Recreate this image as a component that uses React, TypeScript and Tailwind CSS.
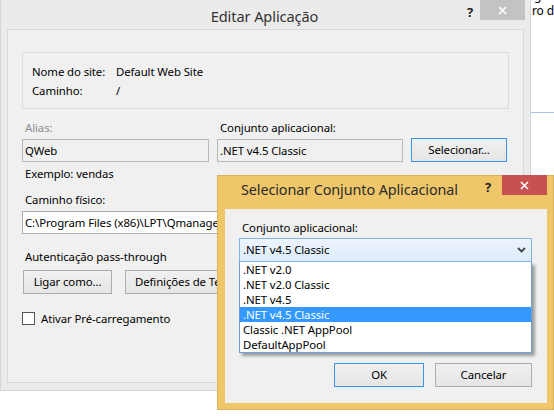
import React from 'react';

const WinButton: React.FC<{ label: string; w: string; focused?: boolean }> = ({ label, w, focused }) => (
  <div
    className={`${w} h-[24px] flex items-center justify-center border bg-gradient-to-b from-[#f0f0f0] to-[#e5e5e5] ${
      focused ? 'border-[#3c94e8]' : 'border-[#adadad]'
    }`}
  >
    {label}
  </div>
);

const poolOptions = ['.NET v2.0', '.NET v2.0 Classic', '.NET v4.5', '.NET v4.5 Classic', 'Classic .NET AppPool', 'DefaultAppPool'];

const SelectPoolDialog: React.FC = () => (
  <div className="absolute left-[217px] top-[175px] w-[337px] h-[235px] bg-[#efc76a] border border-[#dab35a] flex flex-col pl-[7px] pr-[6px] pb-[6px]">
    {/* title bar */}
    <div className="h-[33px] flex items-start shrink-0">
      <div className="flex-1 pl-[16px] pt-[4px] text-[14.4px] tracking-[-0.1px] leading-[20px] text-[#2b2b2b]">Selecionar Conjunto Aplicacional</div>
      <div className="w-[20px] pt-[2px] text-center text-[13px] font-bold text-[#222]">?</div>
      <div className="w-[45px] h-[20px] mt-[-1px] ml-[4px] bg-[#c75050] flex items-center justify-center">
        <svg width="9" height="9" viewBox="0 0 9 9">
          <path d="M1 1L8 8M8 1L1 8" stroke="#fff" strokeWidth="1.6" />
        </svg>
      </div>
    </div>

    {/* body */}
    <div className="flex-1 bg-[#f0f0f0] flex flex-col pl-[14px] pr-[15px]">
      <div className="pt-[11px] pl-[3px] leading-[15px]">Conjunto aplicacional:</div>
      <div className="mt-[3px] h-[24px] border border-[#7eb4ea] bg-gradient-to-b from-[#ecf4fc] to-[#dcecfc] flex items-center pl-[3px] pr-[5px]">
        <span className="flex-1">.NET v4.5 Classic</span>
        <svg width="9" height="6" viewBox="0 0 9 6">
          <path d="M1 1L4.5 4.5L8 1" fill="none" stroke="#444" strokeWidth="1.8" />
        </svg>
      </div>
      <div className="border-x border-b border-[#6f9fd6] bg-white shadow-[3px_3px_3px_rgba(0,0,0,0.35)]">
        {poolOptions.map((opt) => (
          <div
            key={opt}
            className={`h-[15px] leading-[15px] pl-[3px] ${opt === '.NET v4.5 Classic' ? 'bg-[#3399ff] text-white' : ''}`}
          >
            {opt}
          </div>
        ))}
      </div>
      <div className="mt-[10px] flex justify-end gap-[11px]">
        <WinButton label="OK" w="w-[90px]" focused />
        <WinButton label="Cancelar" w="w-[97px]" />
      </div>
    </div>
  </div>
);

const EditAppDialog: React.FC = () => (
  <div className="w-[531px] h-[391px] shrink-0 bg-[#ebebeb] border-l border-r border-b border-[#d6d6d6] flex flex-col pl-[6px] pr-[6px] pb-[7px]">
    {/* title bar */}
    <div className="h-[29px] flex items-start shrink-0">
      <div className="flex-1 pl-[62px] pt-[5px] text-center text-[14.6px] leading-[22px] text-[#333]">Editar Aplicação</div>
      <div className="w-[20px] pt-[3px] text-center text-[13px] font-bold text-[#222]">?</div>
      <div className="w-[45px] h-[20px] mr-[-1px] bg-[#c3c3c3] flex items-center justify-center">
        <svg width="9" height="9" viewBox="0 0 9 9">
          <path d="M1 1L8 8M8 1L1 8" stroke="#fff" strokeWidth="1.6" />
        </svg>
      </div>
    </div>

    {/* content */}
    <div className="flex-1 bg-[#f0f0f0] border border-[#dadada] px-[14px] flex flex-col items-start">
      <div className="mt-[22px] w-[487px] h-[57px] border border-[#dcdcdc] px-[9px] pt-[9px] grid grid-cols-[84px_1fr] content-start leading-[19px]">
        <span>Nome do site:</span>
        <span>Default Web Site</span>
        <span>Caminho:</span>
        <span>/</span>
      </div>

      <div className="mt-[11px] flex items-end gap-[8px]">
        <div className="flex flex-col gap-[4px]">
          <span className="pl-[3px] leading-[15px] text-[#8d8d8d]">Alias:</span>
          <div className="w-[187px] h-[23px] border border-[#b9b9b9] bg-[#f0f0f0] pl-[2px] leading-[21px]">QWeb</div>
        </div>
        <div className="flex flex-col gap-[4px]">
          <span className="pl-[3px] leading-[15px]">Conjunto aplicacional:</span>
          <div className="w-[186px] h-[23px] border border-[#b9b9b9] bg-[#f0f0f0] pl-[2px] leading-[21px]">.NET v4.5 Classic</div>
        </div>
        <WinButton label="Selecionar..." w="w-[96px]" focused />
      </div>

      <span className="mt-[4px] pl-[3px] leading-[15px]">Exemplo: vendas</span>
      <span className="mt-[11px] pl-[3px] leading-[15px]">Caminho físico:</span>
      <div className="mt-[4px] w-[487px] h-[23px] border border-[#abadb3] bg-white pl-[2px] leading-[21px] whitespace-nowrap overflow-hidden">
        C:\Program Files (x86)\LPT\Qmanager\QWeb
      </div>

      <span className="mt-[15px] pl-[3px] leading-[15px]">Autenticação pass-through</span>
      <div className="mt-[6px] ml-[1px] flex gap-[13px]">
        <WinButton label="Ligar como..." w="w-[89px]" />
        <WinButton label="Definições de Teste..." w="w-[130px]" />
      </div>

      <label className="mt-[17px] flex items-center gap-[6px] leading-[15px]">
        <span className="w-[13px] h-[13px] border border-[#555] bg-white" />
        <span>Ativar Pré-carregamento</span>
      </label>
    </div>
  </div>
);

const App: React.FC = () => {
  return (
    <div className="relative w-[554px] h-[416px] overflow-hidden bg-white font-['Noto_Sans',sans-serif] text-[11.4px] tracking-[-0.1px] text-black">
      <div className="flex">
        <EditAppDialog />
        {/* window behind */}
        <div className="flex-1 flex flex-col overflow-hidden whitespace-nowrap">
          <div className="mt-[-12px] pl-[1px] leading-[15px] text-[12px]">
            <div className="pl-[2px]">g</div>
            <div>ro de</div>
          </div>
          <div className="mt-[94px] h-[1px] bg-[#a9c2e6]" />
        </div>
      </div>
      <SelectPoolDialog />
    </div>
  );
};

export default App;
